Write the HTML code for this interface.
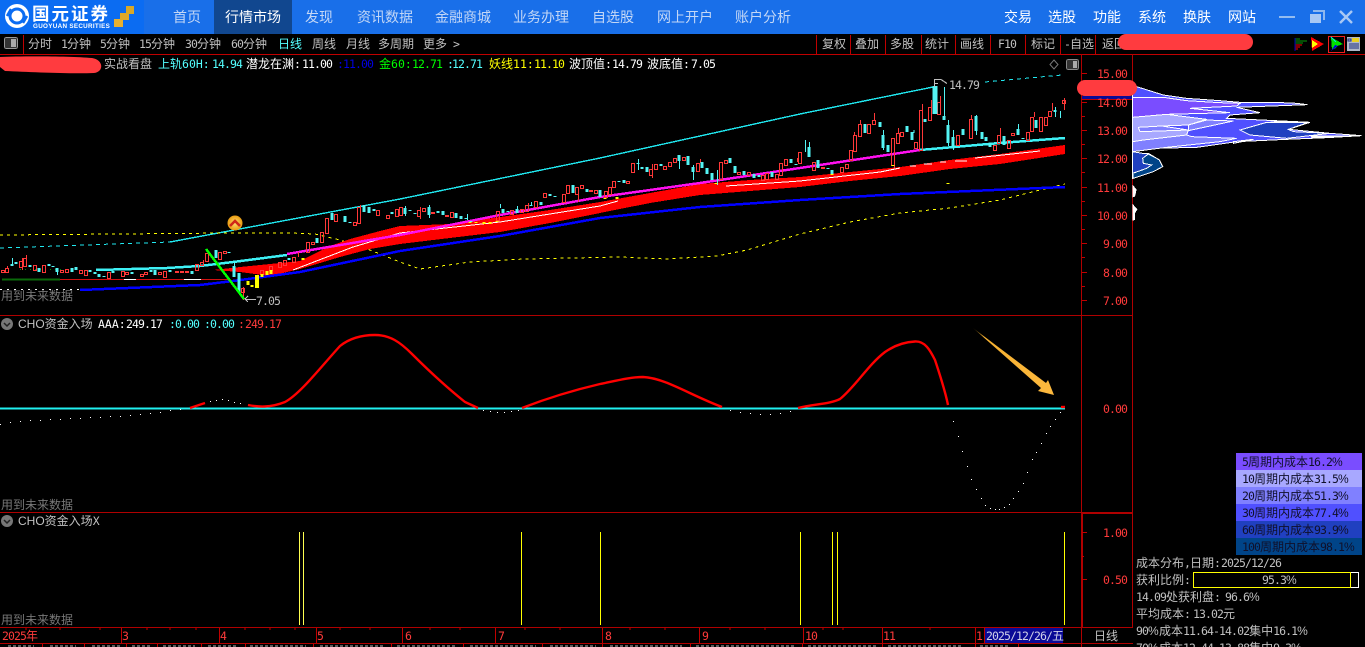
<!DOCTYPE html>
<html lang="zh"><head><meta charset="utf-8"><title>国元证券</title>
<style>
*{margin:0;padding:0;box-sizing:border-box}
html,body{width:1365px;height:647px;background:#000;overflow:hidden}
body{position:relative;font-family:"Liberation Sans","WenQuanYi Zen Hei","Noto Sans CJK SC",sans-serif}
.t{position:absolute;white-space:pre;font-size:12px;line-height:14px;color:#c0c0c0;font-family:"WenQuanYi Zen Hei","Noto Sans CJK SC",sans-serif}
.t i{font-style:normal;font-family:"DejaVu Sans Mono",monospace;font-size:11.5px;letter-spacing:-.92px}
.t i.w7{letter-spacing:0}
.t i.w8{font-family:"Liberation Sans",sans-serif;font-size:12px;letter-spacing:0}
.t u{display:inline-block;width:11px;text-decoration:none;font-family:"Liberation Sans",sans-serif;font-size:12px}
.n{position:absolute;top:8px;font-size:14px;line-height:18px;color:#c3d7f6;white-space:pre;font-family:"Noto Sans CJK SC",sans-serif}
.m{color:#fff}
.b{position:absolute}
.c{color:#54ffff}.r{color:#ff3b3b}.w{color:#fff}.g{color:#777}.y{color:#ff0}.gr{color:#0f0}.bl{color:#0000e0}.k{color:#10102a}
svg{position:absolute;left:0;top:0}
</style></head><body>
<div class="b" style="left:0;top:0;width:1365px;height:34px;background:#196fe9"></div>
<div class="b" style="left:0;top:0;width:144px;height:34px;background:#0b6cf2"></div>
<div class="b" style="left:214px;top:0;width:78px;height:34px;background:#11478f"></div>
<svg width="1365" height="647" viewBox="0 0 1365 647">
<circle cx="17" cy="16" r="12" fill="#fff"/>
<circle cx="17" cy="16" r="7" fill="none" stroke="#0b6cf2" stroke-width="3"/>
<path d="M11 9L7 16M23 23L27 16" stroke="#0b6cf2" stroke-width="2.500"/>
<path d="M14 16l3-3 3 3-3 3z" fill="#fff"/>
<path d="M114 19h9v8h-9z" fill="#e8b030"/><path d="M120 13h9v7h-9z" fill="#e0a828"/><path d="M126 6h8v8h-8z" fill="#d8a828"/>
<path d="M1279 17h16" stroke="#93bcf0" stroke-width="2"/>
<path d="M1310 14h11v9h-11z" fill="#a8c8f4"/><path d="M1313 11h11v9" fill="none" stroke="#8fb8ee" stroke-width="2"/>
<path d="M1340 11l12 12M1352 11l-12 12" stroke="#a8c8f4" stroke-width="2.400"/>
</svg>
<div class="b" style="left:32px;top:4px;font:bold 17.5px/20px 'Noto Sans CJK SC',sans-serif;color:#fff;letter-spacing:2px;white-space:pre">国元证券</div>
<div class="b" style="left:33px;top:23px;font:bold 6.300px/8px 'Liberation Sans',sans-serif;color:#fff;letter-spacing:.3px;white-space:pre">GUOYUAN SECURITIES</div>
<div class="n" style="left:173px">首页</div><div class="n m" style="left:225px">行情市场</div><div class="n" style="left:305px">发现</div><div class="n" style="left:357px">资讯数据</div><div class="n" style="left:435px">金融商城</div><div class="n" style="left:513px">业务办理</div><div class="n" style="left:592px">自选股</div><div class="n" style="left:657px">网上开户</div><div class="n" style="left:735px">账户分析</div>
<div class="n m" style="left:1004px">交易</div><div class="n m" style="left:1048px">选股</div><div class="n m" style="left:1093px">功能</div><div class="n m" style="left:1138px">系统</div><div class="n m" style="left:1183px">换肤</div><div class="n m" style="left:1228px">网站</div>

<svg width="1365" height="647" viewBox="0 0 1365 647" shape-rendering="crispEdges">
<g fill="none" stroke="#c00000">
<path d="M0 54.500H1365M23.500 35V54M816.500 35V54M850.500 35V54M885.500 35V54M921.500 35V54M955.500 35V54M990.500 35V54M1025.500 35V54M1060.500 35V54M1095.500 35V54"/>
<path d="M0 315.500H1133M0 512.500H1133M0 627.500H1133M0 643.500H1133M1081.500 54V643M1132.500 54V628" stroke="#b00000"/>
<path d="M1082.500 513V627M1082 513.500H1133" stroke="#b00000"/>
<path d="M121.500 628V643M219.500 628V643M316.500 628V643M402.500 628V643M495.500 628V643M602.500 628V643M699.500 628V643M803.500 628V643M882.500 628V643M975.500 628V643M984.500 628V643"/>
<path d="M26 628v2M60 628v2M100 628v2M147 628v2M170 628v2M196 628v2M245 628v2M270 628v2M295 628v2M340 628v2M370 628v2M430 628v2M460 628v2M525 628v2M560 628v2M630 628v2M665 628v2M730 628v2M765 628v2M823 628v2M843 628v2M930 628v2M1040 628v2"/>
<path d="M1082 73.500h5M1082 102.500h5M1082 130.500h5M1082 158.500h5M1082 187.500h5M1082 215.500h5M1082 243.500h5M1082 272.500h5M1082 300.500h5M1082 87.500h3M1082 116.500h3M1082 144.500h3M1082 172.500h3M1082 201.500h3M1082 229.500h3M1082 257.500h3M1082 286.500h3M1082 532.500h5M1082 579.500h5M1082 556.500h2"/>
</g>
<path d="M42.500 644V647M84.500 644V647M126.500 644V647M157.500 644V647M201.500 644V647M245.500 644V647M313.500 644V647M391.500 644V647M463.500 644V647M542.500 644V647M602.500 644V647M690.500 644V647M802.500 644V647M882.500 644V647M975.500 644V647M1018.500 644V647M1081.500 644V647" stroke="#c00000" fill="none"/>
<path d="M8 646h26M50 646h26M92 646h28M132 646h18M163 646h32M208 646h30M250 646h56M320 646h64M397 646h60M470 646h66M550 646h46M610 646h72M696 646h100M808 646h70M888 646h74M980 646h30" stroke="#bbb" stroke-dasharray="3 2" fill="none"/>

<path d="M0 248L170 242" stroke="#20e8f0" fill="none" stroke-dasharray="4 4"/>
<path d="M170 242L400 199L600 158L800 114L933 87" stroke="#20e8f0" stroke-width="1.400" fill="none"/>
<path d="M985 82L1062 75" stroke="#20e8f0" fill="none" stroke-dasharray="4 4"/>
<path d="M0 235L233 233L290 233L315 234L340 240L370 250L400 262L420 269L470 262L524 259L620 257L667 259L717 256L747 250L800 234L850 222L900 213L950 208L1000 200L1040 190L1065 184" stroke="#ff0" fill="none" stroke-dasharray="3 4"/>
<path d="M2 279.500H60" stroke="#0a6a0a" stroke-width="2"/><path d="M60 279.500H230" stroke="#d01010"/><path d="M124 279.500h12M184 279.500h17M125 279.500h4" stroke="#fff"/>
<path d="M0 289.500H80" stroke="#fff" stroke-dasharray="2 5"/>
<path d="M20 269.500H62" stroke="#0a8a0a" stroke-dasharray="1 4"/>
<path d="M213 270L240 267L300 261L330 246L350 239L380 231L400 226L450 224L500 217L550 210L600 202L650 193L700 184L750 180L800 177L900 167L950 160L1000 154L1065 145V154L1000 164L950 169L900 176L850 181L800 187L750 191L700 195L650 203L600 213L550 223L500 232L450 238L400 244L370 249L340 257L300 269L270 276L240 272Z" fill="#ff0000"/>
<path d="M293 270L353 247L400 233L500 222L600 206L618 201M726 186L800 181L880 172L900 168M910 166h6M924 164h8M940 162h6M955 161h12M975 158L1040 151" stroke="#fff" fill="none"/>
<path d="M80 290L200 285L233 281L300 272L400 251L500 236L600 218L700 207L800 200L900 194L1065 187" stroke="#0000ff" stroke-width="2.500" fill="none"/>
<path d="M96 270L167 268L200 266L233 262L287 255" stroke="#3ef0f5" stroke-width="2.500" fill="none"/>
<path d="M287 254L400 235L500 215L600 197L700 183L800 168L920 150" stroke="#ff10f0" stroke-width="2.500" fill="none"/>
<path d="M920 150L1000 143L1065 138" stroke="#3ef0f5" stroke-width="2.500" fill="none"/>

<path fill="none" stroke="#ff3838" transform="translate(.5 .5)" d="M1 270h3v2h-3zM5 268h3v4h-3zM19 261h3v6h-3zM23 258h3v8h-3zM33 265h3v5h-3zM42 265h3v7h-3zM60 270h3v2h-3zM65 269h3v3h-3zM79 270h3v3h-3zM84 270h3v5h-3zM107 272h3v6h-3zM121 271h3v5h-3zM125 272h3v2h-3zM140 274h3v2h-3zM144 272h3v2h-3zM158 272h3v2h-3zM163 271h3v6h-3zM175 271h3v1h-3zM180 271h3v1h-3zM185 271h3v1h-3zM195 264h3v6h-3zM200 262h3v3h-3zM205 253h3v8h-3zM218 252h3v7h-3zM223 251h3v2h-3zM241 288h3v4h-3zM260 270h3v4h-3zM269 266h3v4h-3zM278 262h3v5h-3zM283 260h3v5h-3zM292 257h3v5h-3zM306 242h3v10h-3zM311 242h3v2h-3zM320 232h3v10h-3zM325 218h3v15h-3zM334 214h3v7h-3zM353 222h3v3h-3zM357 207h3v16h-3zM376 210h3v5h-3zM386 215h3v3h-3zM395 209h3v7h-3zM399 207h3v8h-3zM417 210h3v6h-3zM422 208h3v3h-3zM431 212h3v1h-3zM445 215h3v1h-3zM450 212h3v5h-3zM496 211h3v9h-3zM510 210h3v4h-3zM520 209h3v3h-3zM525 205h3v6h-3zM534 201h3v6h-3zM543 193h3v4h-3zM562 194h3v8h-3zM566 185h3v8h-3zM575 187h3v7h-3zM580 185h3v3h-3zM589 190h3v1h-3zM594 190h3v3h-3zM604 191h3v6h-3zM608 187h3v7h-3zM612 181h3v6h-3zM626 181h3v2h-3zM631 163h3v9h-3zM649 169h3v6h-3zM654 164h3v5h-3zM663 166h3v3h-3zM668 162h3v4h-3zM673 158h3v4h-3zM682 157h3v3h-3zM696 163h3v8h-3zM719 162h3v17h-3zM724 160h3v3h-3zM737 172h3v2h-3zM747 172h3v3h-3zM761 175h3v5h-3zM765 173h3v6h-3zM775 174h3v5h-3zM779 163h3v12h-3zM784 159h3v6h-3zM798 152h3v11h-3zM812 162h3v8h-3zM821 167h3v1h-3zM840 167h3v5h-3zM845 164h3v4h-3zM849 150h3v10h-3zM853 135h3v16h-3zM858 124h3v12h-3zM867 124h3v9h-3zM872 120h3v4h-3zM891 138h3v27h-3zM896 133h3v10h-3zM900 132h3v4h-3zM914 142h3v6h-3zM919 110h3v40h-3zM928 107h3v13h-3zM937 102h3v12h-3zM956 135h3v10h-3zM969 119h3v19h-3zM993 145h3v5h-3zM997 135h3v8h-3zM1007 140h3v8h-3zM1011 133h3v2h-3zM1026 132h3v8h-3zM1030 117h3v14h-3zM1039 117h3v14h-3zM1044 117h3v8h-3zM1048 111h3v5h-3zM1062 100h3v3h-3z"/>
<path fill="none" stroke="#ff3838" d="M7.500 266v2M22.500 258v12M26.500 255v3M203.500 260v2M243.500 287v13M298.500 252v5M360.500 205v2M420.500 207v12M528.500 203v2M578.500 194v8M652.500 164v14M700.500 159v4M797.500 158v4M894.500 165v3M854.500 132v3M874.500 113v7M898.500 128v5M971.500 115v4M931.500 100v7M940.500 96v6M922.500 104v6M1034.500 112v5M1052.500 103v8M1064.500 98v12M1000.500 128v7M860.500 120v4"/>
<path fill="none" stroke="#54f4f4" stroke-width="3" d="M12 264V266M16 262V264M30 265V267M39 268V272M49 264V266M53 266V267M57 268V272M72 268V272M76 267V270M90 270V272M95 272V274M99 274V277M104 276V277M113 271V273M132 272V274M151 270V272M155 270V275M170 270V272M192 271V274M216 250V258M229 252V253M234 266V277M239 273V293M289 258V260M317 238V243M332 213V220M345 216V222M350 222V223M364 205V212M369 207V213M374 209V211M392 212V214M405 208V214M410 210V211M415 213V214M429 207V215M438 211V213M443 211V215M456 213V218M461 216V219M466 218V219M471 221V222M503 209V213M508 211V212M517 209V213M531 205V206M541 202V205M550 194V196M555 196V197M573 185V193M587 189V192M600 190V197M619 181V182M624 180V183M638 163V164M642 167V169M647 167V172M661 164V166M679 155V161M688 156V165M693 167V172M702 162V168M707 168V174M712 173V180M730 158V163M735 166V173M744 171V175M754 174V178M759 175V177M772 172V177M791 159V163M796 164V165M809 147V157M818 160V168M828 168V169M832 170V175M865 124V133M880 122V127M883 135V148M888 145V152M907 126V132M912 132V140M925 119V122M944 116V120M948 125V143M953 137V147M963 129V135M976 116V131M982 132V139M986 137V141M990 143V147M1004 136V145M1018 129V135M1023 138V139M1036 120V128M1055 110V112"/>
<path fill="none" stroke="#54f4f4" stroke-width="5" d="M935 86V114"/>
<path fill="none" stroke="#54f4f4" d="M12.500 258v8M57.500 268v7M234.500 262v6M405.500 206v10M429.500 205v13M467.500 214v6M500.500 204v4M517.500 206v3M531.500 202v4M638.500 159v11M679.500 161v8M693.500 165v15M717.500 170v15M883.500 130v20M944.500 87v29M948.500 120v26M953.500 130v20M1060.500 111v7M1055.500 107v10M805.500 140v12M1018.500 124v10M976.500 115v20M809.500 142v5M914 130v3"/>
<path fill="none" stroke="#ff0" stroke-width="3" d="M248 281V285M252 285V287M262 274V277M267 271V275M271 270V274M303 258V260M470 222V223M476 222V223M484 222V224M490 222V224M497 221V222M605 198V199M617 197V199M832 174V175M893 165V166M716 183V184M948 183V184"/><path fill="none" stroke="#ff0" stroke-width="4" d="M257 275V288"/>
<path d="M206 249L244 299" stroke="#0f0" stroke-width="2.500" fill="none"/>
<path d="M245 299.500h11M248 296l-3 3 3 3" stroke="#c0c0c0" fill="none"/>
<path d="M934 79.500h7l6 4M934.500 79v8M934 83.500h4" stroke="#c0c0c0" fill="none"/>
<path d="M1054 60l4 4.500-4 4.500-4-4.500z" stroke="#777" fill="none" shape-rendering="auto"/>
<rect x="1066.500" y="59.500" width="12" height="10" rx="2" fill="#333" stroke="#888"/><rect x="1073" y="61" width="4" height="7" fill="#aaa"/>
<rect x="4.500" y="37.500" width="13" height="11" rx="2" fill="#333" stroke="#999"/><rect x="11" y="39" width="5" height="8" fill="#aaa"/>

<path d="M0 408.500H1065" stroke="#20f0f0" stroke-width="2"/>
<g fill="none" stroke="#ff0000" stroke-width="2.400" shape-rendering="auto">
<path d="M190 408L205 403"/>
<path d="M248 405C258 407 270 408 285 402C300 394 320 368 340 346C350 338 362 335 375 335C390 335 400 342 412 354C430 372 450 390 465 402L478 408"/>
<path d="M522 408C540 401 570 391 600 384C615 381 630 377 643 377C665 378 690 395 722 407"/>
<path d="M798 408C815 404 830 404 840 399C855 387 868 365 885 352C895 345 905 342 915 341.500C925 341 930 350 935 360C940 375 945 390 948 405"/>
<path d="M1061 407h4"/>
</g>
<path fill="#fff" d="M0 424h1v1H0zM10 422h1v1h-1zM20 421h1v1h-1zM30 420h1v1h-1zM40 420h1v1h-1zM50 419h1v1h-1zM60 419h1v1h-1zM70 418h1v1h-1zM80 418h1v1h-1zM90 417h1v1h-1zM100 417h1v1h-1zM110 416h1v1h-1zM120 416h1v1h-1zM130 415h1v1h-1zM140 414h1v1h-1zM150 413h1v1h-1zM160 412h1v1h-1zM170 410h1v1h-1zM180 409h1v1h-1zM210 401h1v1h-1zM216 400h1v1h-1zM222 399h1v1h-1zM228 400h1v1h-1zM234 402h1v1h-1zM240 403h1v1h-1zM483 410h1v1h-1zM490 411h1v1h-1zM497 412h1v1h-1zM504 412h1v1h-1zM511 411h1v1h-1zM518 410h1v1h-1zM730 410h1v1h-1zM740 412h1v1h-1zM750 413h1v1h-1zM760 414h1v1h-1zM770 414h1v1h-1zM780 413h1v1h-1zM790 411h1v1h-1zM953 421h1v1h-1zM958 436h1v1h-1zM962 451h1v1h-1zM967 466h1v1h-1zM971 479h1v1h-1zM976 489h1v1h-1zM981 498h1v1h-1zM985 505h1v1h-1zM990 508h1v1h-1zM995 509h1v1h-1zM999 509h1v1h-1zM1004 507h1v1h-1zM1009 504h1v1h-1zM1013 498h1v1h-1zM1018 491h1v1h-1zM1023 483h1v1h-1zM1027 472h1v1h-1zM1032 459h1v1h-1zM1036 452h1v1h-1zM1041 443h1v1h-1zM1046 433h1v1h-1zM1050 426h1v1h-1zM1055 419h1v1h-1zM1060 412h1v1h-1z"/>
<defs><linearGradient id="ar" x1="975" y1="330" x2="1050" y2="392" gradientUnits="userSpaceOnUse"><stop offset="0" stop-color="#3a2a05"/><stop offset=".12" stop-color="#f5b030"/><stop offset="1" stop-color="#fdb93e"/></linearGradient>
<radialGradient id="gd"><stop offset="0" stop-color="#ffe070"/><stop offset="1" stop-color="#e89a10"/></radialGradient></defs>
<path d="M973 328L1046 383L1048 380L1054 395L1038 391L1041 388Z" fill="url(#ar)" shape-rendering="auto"/>
<path d="M299.500 532V625M303.500 532V625" stroke="#ffff50"/>
<path d="M521.500 532V625M600.500 532V625M800.500 532V625M832.500 532V625M837.500 532V625M1064.500 532V625" stroke="#ff0"/>

<g transform="translate(1120 70) scale(.33333)" stroke="#fff" stroke-width="3" stroke-linejoin="miter">
<path fill="#5050ff" d="M38 45L50 50L130 75L200 85L300 92L360 97L465 97L530 100L562 104L350 112L420 128L330 135L320 145L570 157L505 178L630 190L725 197L620 203L500 208L350 215L230 232L100 235L38 245Z"/>
<path fill="#8080ff" d="M38 215L70 210L200 195L215 200L350 205L300 215L140 232L38 245ZM205 165L260 150L340 153L205 182Z"/>
<path fill="#2040c0" d="M360 180L440 157L565 157L505 178L520 185L630 190L500 205L390 195ZM340 215L400 208L340 220Z"/>
<path fill="#a8a8ff" d="M38 142L140 133L260 148L205 165L125 168L55 172L60 185L205 180L200 195L70 210L38 215Z"/>
<path fill="#8080ff" stroke="#fff" d="M55 172L125 168L205 180L60 185Z"/>
<path fill="#7a4dff" d="M38 82L130 82L200 92L300 98L360 100L350 108L210 115L330 128L140 133L38 142Z"/>
<path fill="#2040c0" d="M38 245L68 250L85 250L110 265L118 270L128 290L100 305L38 325Z"/>
<path fill="#004488" d="M68 265L85 252L110 265L118 270L128 290L100 305L40 325L38 310L80 295L95 285L70 280Z"/>
<path fill="#fff" stroke="none" d="M38 345L50 358L45 380L38 382ZM38 402L52 418L45 430L45 450L38 452Z"/>
<path fill="#fff" stroke="none" d="M570 197L725 197L620 203L575 204ZM440 152L570 155L480 158Z"/>
</g>
<rect x="1236" y="453" width="126" height="17" fill="#7a4dff"/><rect x="1236" y="470" width="126" height="17" fill="#a8a8ff"/><rect x="1236" y="487" width="126" height="17" fill="#8080ff"/><rect x="1236" y="504" width="126" height="17" fill="#5050ff"/><rect x="1236" y="521" width="126" height="17" fill="#2040c0"/><rect x="1236" y="538" width="126" height="17" fill="#004488"/>
<rect x="1193.500" y="572.500" width="157" height="15" fill="none" stroke="#ff0"/><path d="M1351 572.500h7.500v15H1351" fill="none" stroke="#fff"/>
<rect x="985" y="628" width="78" height="15" fill="#0a0a96"/>

<path d="M1295 39h5M1295 41h12M1295 43h8" stroke="#0a9a0a" fill="none"/><path d="M1295 45h7M1295 47h5M1295 49h3" stroke="#f00" fill="none"/><path d="M1295 38v13" stroke="#0000c0"/>
<path d="M1311 37L1324 44L1312 51Z" fill="#f00"/><path d="M1312 40L1318 44L1312 48Z" fill="#ff0"/>
<rect x="1328.500" y="36.500" width="16" height="16" fill="none" stroke="#f02020"/><path d="M1331 37L1343 44L1337 46L1336 48L1332 50Z" fill="#00e000"/><path d="M1335 45L1338 46L1331 51Z" fill="#0000e0"/><path d="M1331 37l5 5" stroke="#00e0e0"/>
<rect x="1347" y="37" width="13" height="14" fill="#b0b8c8"/><path d="M1352 38h7v4h-7z" fill="#e8d020"/><path d="M1348 39h3v2h-3zM1349 44h10M1349 46h10M1349 48h10" stroke="#203080" fill="none"/>
<g shape-rendering="auto" fill="#ff3b3f">
<path d="M0 57C20 56 70 56 92 58C104 60 104 72 94 73C70 74 30 72 5 71L0 67Z"/>
<rect x="1077" y="80" width="60" height="16" rx="8"/>
</g>
<rect x="1082" y="96" width="50" height="3" fill="#0a0a96"/><path d="M1082 99.500h50" stroke="#c00000"/>
<circle cx="235" cy="223" r="7.500" fill="url(#gd)" shape-rendering="auto"/>
<path d="M230 226l5-5 5 5" fill="none" stroke="#d02818" stroke-width="2.600" shape-rendering="auto"/>
<circle cx="7" cy="324" r="6" fill="#777" shape-rendering="auto"/><path d="M4 323l3 3 3-3" stroke="#222" stroke-width="1.500" fill="none" shape-rendering="auto"/>
<circle cx="7" cy="521" r="6" fill="#777" shape-rendering="auto"/><path d="M4 520l3 3 3-3" stroke="#222" stroke-width="1.500" fill="none" shape-rendering="auto"/>
</svg>

<div class="t" style="left:28px;top:37px">分时</div><div class="t" style="left:61px;top:37px"><i>1</i>分钟</div><div class="t" style="left:100px;top:37px"><i>5</i>分钟</div><div class="t" style="left:139px;top:37px"><i>15</i>分钟</div><div class="t" style="left:185px;top:37px"><i>30</i>分钟</div><div class="t" style="left:231px;top:37px"><i>60</i>分钟</div><div class="t c" style="left:278px;top:37px">日线</div><div class="t" style="left:312px;top:37px">周线</div><div class="t" style="left:346px;top:37px">月线</div><div class="t" style="left:378px;top:37px">多周期</div><div class="t" style="left:423px;top:37px">更多<i> &gt;</i></div>
<div class="t" style="left:822px;top:37px">复权</div><div class="t" style="left:855px;top:37px">叠加</div><div class="t" style="left:890px;top:37px">多股</div><div class="t" style="left:925px;top:37px">统计</div><div class="t" style="left:960px;top:37px">画线</div><div class="t" style="left:998px;top:37px"><i>F10</i></div><div class="t" style="left:1031px;top:37px">标记</div><div class="t" style="left:1064px;top:37px"><i>-</i>自选</div><div class="t" style="left:1102px;top:37px">返回</div>
<svg width="1365" height="60" viewBox="0 0 1365 60"><rect x="1118" y="34" width="135" height="16" rx="8" fill="#ff3b3f"/></svg>

<div class="t" style="left:104px;top:57px">实战看盘</div>
<div class="t c" style="left:158px;top:57px">上轨<i class="w7">60H:</i></div><div class="t c" style="left:212px;top:57px"><i>14.94</i></div>
<div class="t w" style="left:246px;top:57px">潜龙在渊<i>:</i></div><div class="t w" style="left:302px;top:57px"><i>11.00</i></div>
<div class="t bl" style="left:337px;top:57px"><i>:</i></div><div class="t bl" style="left:343px;top:57px"><i>11.00</i></div>
<div class="t gr" style="left:379px;top:57px">金<i class="w7">60:</i></div><div class="t gr" style="left:412px;top:57px"><i>12.71</i></div>
<div class="t c" style="left:447px;top:57px"><i>:</i></div><div class="t c" style="left:452px;top:57px"><i>12.71</i></div>
<div class="t y" style="left:489px;top:57px">妖线<i class="w7">11:</i></div><div class="t y" style="left:534px;top:57px"><i>11.10</i></div>
<div class="t w" style="left:569px;top:57px">波顶值<i>:</i></div><div class="t w" style="left:612px;top:57px"><i>14.79</i></div>
<div class="t w" style="left:647px;top:57px">波底值<i>:</i></div><div class="t w" style="left:691px;top:57px"><i>7.05</i></div>
<div class="t" style="left:949px;top:78px"><i>14.79</i></div>
<div class="t" style="left:256px;top:294px"><i>7.05</i></div>
<div class="t g" style="left:1px;top:289px">用到未来数据</div><div class="t g" style="left:1px;top:498px">用到未来数据</div><div class="t g" style="left:1px;top:613px">用到未来数据</div>

<div class="t r" style="left:1097px;top:67px"><i>15.00</i></div><div class="t r" style="left:1097px;top:96px"><i>14.00</i></div><div class="t r" style="left:1097px;top:124px"><i>13.00</i></div><div class="t r" style="left:1097px;top:152px"><i>12.00</i></div><div class="t r" style="left:1097px;top:181px"><i>11.00</i></div><div class="t r" style="left:1097px;top:209px"><i>10.00</i></div><div class="t r" style="left:1103px;top:237px"><i>9.00</i></div><div class="t r" style="left:1103px;top:266px"><i>8.00</i></div><div class="t r" style="left:1103px;top:294px"><i>7.00</i></div>
<div class="t r" style="left:1103px;top:402px"><i>0.00</i></div><div class="t r" style="left:1103px;top:526px"><i>1.00</i></div><div class="t r" style="left:1103px;top:573px"><i>0.50</i></div>

<div class="t" style="left:18px;top:317px"><i class="w8">CHO</i>资金入场</div>
<div class="t w" style="left:98px;top:317px"><i class="w7">AAA:</i></div><div class="t w" style="left:126px;top:317px"><i>249.17</i></div>
<div class="t c" style="left:169px;top:317px"><i>:</i></div><div class="t c" style="left:175px;top:317px"><i>0.00</i></div>
<div class="t c" style="left:204px;top:317px"><i>:</i></div><div class="t c" style="left:210px;top:317px"><i>0.00</i></div>
<div class="t r" style="left:238px;top:317px"><i>:</i></div><div class="t r" style="left:245px;top:317px"><i>249.17</i></div>
<div class="t" style="left:18px;top:514px"><i class="w8">CHO</i>资金入场<i>X</i></div>

<div class="t r" style="left:2px;top:629px"><i>2025</i>年</div><div class="t r" style="left:122px;top:629px"><i>3</i></div><div class="t r" style="left:220px;top:629px"><i>4</i></div><div class="t r" style="left:317px;top:629px"><i>5</i></div><div class="t r" style="left:405px;top:629px"><i>6</i></div><div class="t r" style="left:498px;top:629px"><i>7</i></div><div class="t r" style="left:605px;top:629px"><i>8</i></div><div class="t r" style="left:702px;top:629px"><i>9</i></div><div class="t r" style="left:805px;top:629px"><i>10</i></div><div class="t r" style="left:883px;top:629px"><i>11</i></div><div class="t r" style="left:976px;top:629px"><i>1</i></div>
<div class="t" style="left:986px;top:629px;color:#d0d0e8"><i>2025/12/26/</i>五</div>
<div class="t" style="left:1094px;top:629px">日线</div>

<div class="t k" style="left:1242px;top:455px"><i>5</i>周期内成本<i>16.2</i><u>%</u></div>
<div class="t k" style="left:1242px;top:472px"><i>10</i>周期内成本<i>31.5</i><u>%</u></div>
<div class="t k" style="left:1242px;top:489px"><i>20</i>周期内成本<i>51.3</i><u>%</u></div>
<div class="t k" style="left:1242px;top:506px"><i>30</i>周期内成本<i>77.4</i><u>%</u></div>
<div class="t k" style="left:1242px;top:523px"><i>60</i>周期内成本<i>93.9</i><u>%</u></div>
<div class="t k" style="left:1242px;top:540px"><i>100</i>周期内成本<i>98.1</i><u>%</u></div>

<div class="t" style="left:1136px;top:556px">成本分布<i>,</i>日期<i>:</i></div><div class="t" style="left:1221px;top:556px"><i>2025/12/26</i></div>
<div class="t" style="left:1136px;top:573px">获利比例<i>:</i></div>
<div class="t" style="left:1262px;top:573px"><i>95.3</i><u>%</u></div>
<div class="t" style="left:1136px;top:590px"><i>14.09</i>处获利盘<i>:</i></div><div class="t" style="left:1225px;top:590px"><i>96.6</i><u>%</u></div>
<div class="t" style="left:1136px;top:607px">平均成本<i>:</i></div><div class="t" style="left:1193px;top:607px"><i>13.02</i>元</div>
<div class="t" style="left:1136px;top:624px"><i>90</i><u>%</u>成本<i>11.64-14.02</i>集中<i>16.1</i><u>%</u></div>
<div class="t" style="left:1136px;top:641px"><i>70</i><u>%</u>成本<i>12.44-13.88</i>集中<i>9.3</i><u>%</u></div>
</body></html>
